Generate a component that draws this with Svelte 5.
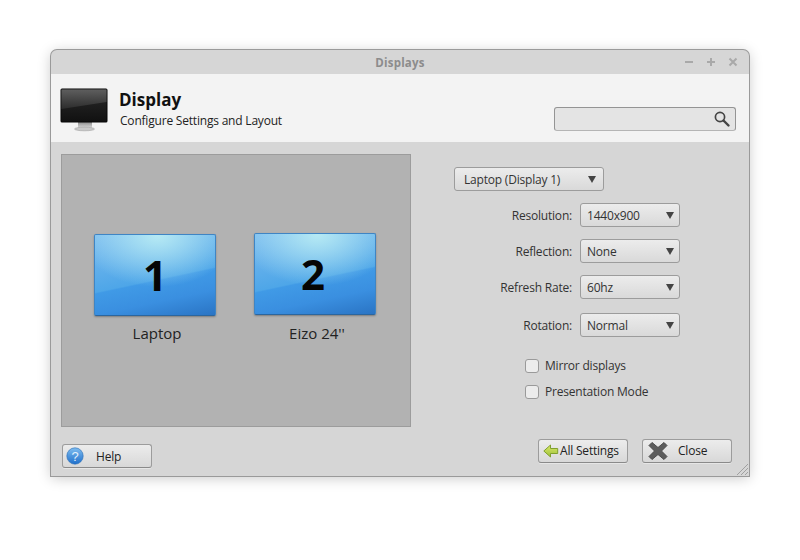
<script>
    const settings = [
        { label: 'Resolution:', value: '1440x900' },
        { label: 'Reflection:', value: 'None' },
        { label: 'Refresh Rate:', value: '60hz' },
        { label: 'Rotation:', value: 'Normal' }
    ];
    const monitors = [
        { id: 1, name: 'Laptop' },
        { id: 2, name: "Eizo 24''" }
    ];
    const options = ['Mirror displays', 'Presentation Mode'];
</script>

<div class="page">
    <div class="window">
        <div class="titlebar">
            <span class="title">Displays</span>
            <div class="controls">
                <svg width="10" height="10" viewBox="0 0 10 10"><path d="M1 5h8" stroke="#a9a9a9" stroke-width="2"/></svg>
                <svg width="10" height="10" viewBox="0 0 10 10"><path d="M1 5h8M5 1v8" stroke="#a9a9a9" stroke-width="2"/></svg>
                <svg width="10" height="10" viewBox="0 0 10 10"><path d="M1.500 1.500l7 7M8.500 1.500l-7 7" stroke="#a9a9a9" stroke-width="2"/></svg>
            </div>
        </div>

        <header class="head">
            <svg class="display-icon" width="50" height="44" viewBox="0 0 50 44">
                <defs>
                    <linearGradient id="stand" x1="0" y1="0" x2="0" y2="1">
                        <stop offset="0" stop-color="#8b8b8b"/>
                        <stop offset="1" stop-color="#e8e8e8"/>
                    </linearGradient>
                    <linearGradient id="screen" x1="0" y1="0" x2="0" y2="1">
                        <stop offset="0" stop-color="#5e5e5e"/>
                        <stop offset="1" stop-color="#2c2c2c"/>
                    </linearGradient>
                    <linearGradient id="base" x1="0" y1="0" x2="0" y2="1">
                        <stop offset="0" stop-color="#2a2a2a"/>
                        <stop offset="1" stop-color="#111"/>
                    </linearGradient>
                </defs>
                <rect x="18" y="34" width="14" height="7" fill="url(#stand)"/>
                <ellipse cx="24.500" cy="41" rx="10" ry="1.800" fill="#c9c9c9" stroke="#999" stroke-width=".5"/>
                <rect x=".5" y=".5" width="47" height="34" rx="1.500" fill="#060606"/>
                <rect x="1.500" y="1.500" width="45" height="32" fill="url(#base)"/>
                <path d="M1.500 1.500h45v12.500l-45 7z" fill="url(#screen)"/>
            </svg>
            <div class="head-text">
                <h1>Display</h1>
                <p>Configure Settings and Layout</p>
            </div>
            <div class="search">
                <svg width="18" height="18" viewBox="0 0 18 18">
                    <circle cx="7" cy="7" r="4.600" fill="none" stroke="#444" stroke-width="1.700"/>
                    <path d="M10.500 10.500l5 5" stroke="#444" stroke-width="2.400" stroke-linecap="round"/>
                </svg>
            </div>
        </header>

        <div class="body">
            <div class="left">
                <div class="preview">
                    {#each monitors as m}
                        <div class="monitor" class:first={m.id === 1}>
                            <div class="screen"><span>{m.id}</span></div>
                            <div class="name">{m.name}</div>
                        </div>
                    {/each}
                </div>
                <button class="btn help">
                    <svg width="18" height="18" viewBox="0 0 18 18">
                        <defs>
                            <linearGradient id="q" x1="0" y1="0" x2="0" y2="1">
                                <stop offset="0" stop-color="#7fbdf0"/>
                                <stop offset="1" stop-color="#1f6fcb"/>
                            </linearGradient>
                        </defs>
                        <circle cx="9" cy="9" r="8.200" fill="url(#q)" stroke="#2a6db5" stroke-width=".6"/>
                        <text x="9" y="13.500" text-anchor="middle" font-size="13" fill="#e4f0fb" font-family="Liberation Sans, sans-serif">?</text>
                    </svg>
                    <span>Help</span>
                </button>
            </div>

            <div class="right">
                <div class="select display-select">
                    <span>Laptop (Display 1)</span><i></i>
                </div>
                <div class="form">
                    {#each settings as s}
                        <div class="row">
                            <span class="label">{s.label}</span>
                            <div class="select"><span>{s.value}</span><i></i></div>
                        </div>
                    {/each}
                </div>
                <div class="checks">
                    {#each options as o}
                        <div class="check"><b></b><span>{o}</span></div>
                    {/each}
                </div>
                <div class="actions">
                    <button class="btn settings">
                        <svg width="16" height="14" viewBox="0 0 16 14">
                            <defs>
                                <linearGradient id="arrow" x1="0" y1="0" x2="0" y2="1">
                                    <stop offset="0" stop-color="#dbe86a"/>
                                    <stop offset="1" stop-color="#9dc23a"/>
                                </linearGradient>
                            </defs>
                            <path d="M.8 7L7.500 1v3.500h7.200v5H7.500V13z" fill="url(#arrow)" stroke="#80a02f" stroke-linejoin="round"/>
                        </svg>
                        <span>All Settings</span>
                    </button>
                    <button class="btn close">
                        <svg width="22" height="20" viewBox="0 0 22 20">
                            <path d="M2 4.500L5 1.500l6 5 6-5 3 3-5.500 5.500 5.500 5.500-3 3-6-5-6 5-3-3L7.500 10z" fill="#5c5c5c" stroke="#4a4a4a" stroke-linejoin="round"/>
                        </svg>
                        <span>Close</span>
                    </button>
                </div>
            </div>
            <svg class="grip" width="14" height="14" viewBox="0 0 14 14">
                <path d="M13 2L2 13M13 6L6 13M13 10L10 13" stroke="#a0a0a0" fill="none"/>
            </svg>
        </div>
    </div>
</div>

<style>
    :global(body) {
        background: #fff;
    }

    .page {
        padding: 50px 50px 0 51px;
        height: 560px;
        box-sizing: border-box;
        font-family: "Open Sans", "Noto Sans", sans-serif;
        font-size: 12px;
        letter-spacing: -0.2px;
        color: #333;
    }

    .window {
        width: 698px;
        height: 426px;
        box-sizing: border-box;
        background: #d6d6d6;
        border-radius: 6px 6px 0 0;
        box-shadow: 0 0 0 1px #9a9a9a, 0 2px 14px rgba(0, 0, 0, 0.22);
        display: flex;
        flex-direction: column;
        overflow: hidden;
    }

    .titlebar {
        height: 24px;
        flex: none;
        position: relative;
        display: flex;
        align-items: center;
        justify-content: center;
    }

    .title {
        font-weight: 700;
        font-size: 11.500px;
        color: #8c8c8c;
        letter-spacing: 0.2px;
    }

    .controls {
        position: absolute;
        right: 11px;
        top: 7px;
        display: flex;
        gap: 12px;
    }

    .controls svg {
        display: block;
    }

    .head {
        height: 68px;
        flex: none;
        background: #f3f3f3;
        display: flex;
        padding: 14px 13px 0 9px;
        box-sizing: border-box;
    }

    .display-icon {
        display: block;
        flex: none;
    }

    .head-text {
        margin-left: 9px;
        flex: 1;
    }

    h1 {
        margin: 0;
        font-size: 17px;
        line-height: 23px;
        font-weight: 700;
        letter-spacing: 0;
        color: #111;
    }

    .head-text p {
        margin: 1px 0 0 1px;
        font-size: 12px;
        line-height: 17px;
        color: #222;
    }

    .search {
        width: 182px;
        height: 24px;
        margin-top: 19px;
        box-sizing: border-box;
        border: 1px solid #949494;
        border-bottom-color: #b5b5b5;
        border-radius: 3px;
        background: #e4e4e4;
        display: flex;
        align-items: center;
        justify-content: flex-end;
        padding-right: 4px;
    }

    .body {
        flex: 1;
        position: relative;
        display: flex;
        padding: 12px 17px 0 10px;
    }

    .left {
        width: 350px;
        flex: none;
    }

    .preview {
        height: 273px;
        box-sizing: border-box;
        background: #b2b2b2;
        border: 1px solid #9c9c9c;
        display: flex;
        gap: 38px;
        padding: 78px 0 0 32px;
    }

    .monitor {
        width: 122px;
        text-align: center;
    }

    .first {
        margin-top: 1px;
    }

    .screen {
        height: 82px;
        box-sizing: border-box;
        border: 1px solid #3f85c4;
        border-bottom-color: #2b669f;
        border-radius: 2px;
        background:
            radial-gradient(ellipse 65% 65% at 52% 0, #b6eaf4, rgba(182, 234, 244, 0) 100%),
            linear-gradient(168deg, #7cbcef 0, #4ea6e8 54.500%, #409ae6 56%, #3a8fe0 76%, #2a74c4 100%);
        box-shadow: 0 1px 2px rgba(0, 0, 0, 0.3);
        display: flex;
        align-items: center;
        justify-content: center;
    }

    .screen span {
        font-size: 42px;
        line-height: 1;
        font-weight: 700;
        letter-spacing: 0;
        color: #050505;
    }

    .monitor:not(.first) .screen span {
        margin-left: -4px;
    }

    .name {
        margin-top: 9px;
        padding-left: 4px;
        font-size: 15px;
        line-height: 19px;
        letter-spacing: 0;
        color: #222;
    }

    .first .name {
        margin-top: 8px;
    }

    .btn {
        height: 24px;
        width: 90px;
        box-sizing: border-box;
        border: 1px solid #9c9c9c;
        border-bottom-color: #8a8a8a;
        border-radius: 3px;
        background: linear-gradient(#ececec, #d8d8d8);
        box-shadow: 0 1px 0 rgba(255, 255, 255, 0.4);
        font: inherit;
        letter-spacing: inherit;
        color: #222;
        padding: 0;
        display: flex;
        align-items: center;
    }

    .btn span {
        margin-bottom: 1px;
    }

    .help {
        margin: 17px 0 0 1px;
        padding-left: 3px;
    }

    .help span {
        margin: 0 0 0 12px;
    }

    .right {
        flex: 1;
        padding: 13px 0 0 43px;
    }

    .select {
        position: relative;
        height: 24px;
        width: 100px;
        box-sizing: border-box;
        border: 1px solid #9c9c9c;
        border-radius: 3px;
        background: linear-gradient(#ececec, #d9d9d9);
        display: flex;
        align-items: center;
        padding: 0 0 0 6px;
        color: #333;
    }

    .select i {
        position: absolute;
        right: 5px;
        top: 8px;
        width: 0;
        height: 0;
        border-left: 4px solid transparent;
        border-right: 4px solid transparent;
        border-top: 7px solid #444;
    }

    .display-select {
        width: 150px;
        padding-left: 9px;
    }

    .display-select i {
        right: 7px;
    }

    .form {
        width: 226px;
        margin-top: 12px;
    }

    .row {
        display: flex;
        align-items: center;
        justify-content: flex-end;
        gap: 8px;
        margin-bottom: 12px;
    }

    .row:nth-child(3) {
        margin-bottom: 14px;
    }

    .label {
        color: #333;
    }

    .checks {
        margin: 22px 0 0 71px;
    }

    .check {
        display: flex;
        align-items: center;
        gap: 6px;
        height: 14px;
        margin-bottom: 12px;
    }

    .check b {
        width: 14px;
        height: 14px;
        box-sizing: border-box;
        border: 1px solid #9a9a9a;
        border-radius: 3px;
        background: #ececec;
    }

    .check span {
        margin-bottom: 2px;
    }

    .actions {
        display: flex;
        gap: 14px;
        margin: 40px 0 0 84px;
    }

    .settings {
        padding-left: 4px;
    }

    .settings span {
        margin-left: 1px;
    }

    .close {
        padding-left: 4px;
    }

    .close span {
        margin-left: 9px;
    }

    .grip {
        position: absolute;
        right: 0;
        bottom: 0;
    }
</style>
